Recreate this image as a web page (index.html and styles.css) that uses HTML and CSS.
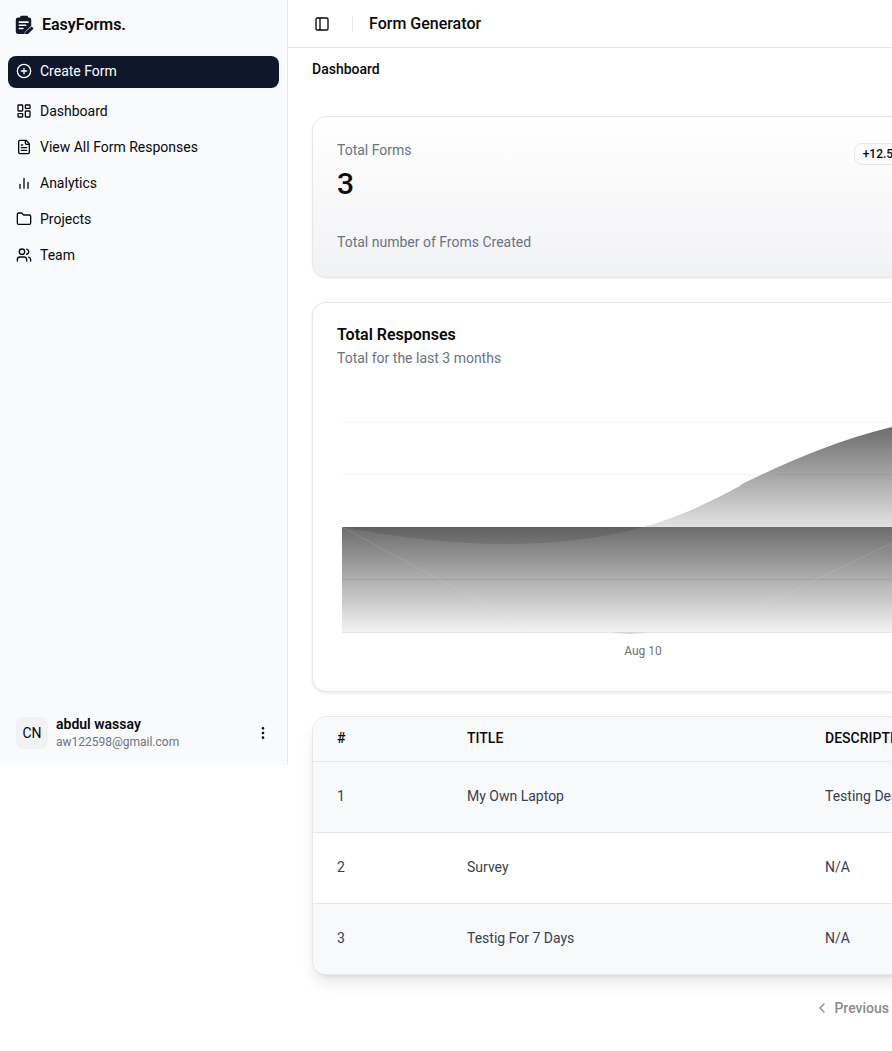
FILE: index.html
```html
<!DOCTYPE html>
<html lang="en">
<head>
  <meta charset="utf-8">
  <title>EasyForms</title>
  <link rel="stylesheet" href="styles.css">
</head>
<body>
<div class="app">

  <aside class="sidebar">
    <div class="brand">
      <svg class="logo" viewBox="0 0 24 24"><path d="M8 1h7a1.500 1.500 0 0 1 1.500 1.500V3h1A3 3 0 0 1 20.500 6v7.500L12.500 21.500 12 24H4a3 3 0 0 1-3-3V6a3 3 0 0 1 3-3h2.500v-.5A1.500 1.500 0 0 1 8 1z"/><path class="logo-cut" d="M5.500 9h11M5.500 13h8M5.500 17h4.500" /><path d="M21 14.500l2.500 2.500-7.500 7.500-3.500.5.500-3.500z"/></svg>
      <span class="brand-name">EasyForms.</span>
    </div>
    <a class="create-btn">
      <svg class="icon" viewBox="0 0 24 24"><circle cx="12" cy="12" r="10"/><path d="M8 12h8M12 8v8"/></svg>
      Create Form
    </a>
    <nav class="nav">
      <a class="nav-item">
        <svg class="icon" viewBox="0 0 24 24"><rect x="3" y="3" width="7" height="9" rx="1"/><rect x="14" y="3" width="7" height="5" rx="1"/><rect x="14" y="12" width="7" height="9" rx="1"/><rect x="3" y="16" width="7" height="5" rx="1"/></svg>
        Dashboard
      </a>
      <a class="nav-item">
        <svg class="icon" viewBox="0 0 24 24"><path d="M15 2H6a2 2 0 0 0-2 2v16a2 2 0 0 0 2 2h12a2 2 0 0 0 2-2V7Z"/><path d="M14 2v4a2 2 0 0 0 2 2h4"/><path d="M10 9H8M16 13H8M16 17H8"/></svg>
        View All Form Responses
      </a>
      <a class="nav-item">
        <svg class="icon" viewBox="0 0 24 24"><path d="M6 20v-6M12 20V5M18 20v-9"/></svg>
        Analytics
      </a>
      <a class="nav-item">
        <svg class="icon" viewBox="0 0 24 24"><path d="M20 20a2 2 0 0 0 2-2V8a2 2 0 0 0-2-2h-7.900a2 2 0 0 1-1.690-.9L9.600 3.900A2 2 0 0 0 7.930 3H4a2 2 0 0 0-2 2v13a2 2 0 0 0 2 2Z"/></svg>
        Projects
      </a>
      <a class="nav-item">
        <svg class="icon" viewBox="0 0 24 24"><path d="M16 21v-2a4 4 0 0 0-4-4H6a4 4 0 0 0-4 4v2"/><circle cx="9" cy="7" r="4"/><path d="M22 21v-2a4 4 0 0 0-3-3.870"/><path d="M16 3.130a4 4 0 0 1 0 7.750"/></svg>
        Team
      </a>
    </nav>
    <div class="user">
      <div class="avatar">CN</div>
      <div class="user-info">
        <div class="user-name">abdul wassay</div>
        <div class="user-mail">aw122598@gmail.com</div>
      </div>
      <svg class="icon" viewBox="0 0 24 24"><circle cx="12" cy="5" r="1"/><circle cx="12" cy="12" r="1"/><circle cx="12" cy="19" r="1"/></svg>
    </div>
  </aside>

  <div class="main">
    <header class="topbar">
      <svg class="icon" viewBox="0 0 24 24"><rect x="3" y="3" width="18" height="18" rx="2"/><path d="M9 3v18"/></svg>
      <span class="topbar-sep"></span>
      <span class="topbar-title">Form Generator</span>
    </header>

    <div class="content">
      <div class="crumb">Dashboard</div>

      <section class="card stat">
        <div class="stat-top">
          <div class="stat-label">Total Forms</div>
          <span class="badge">+12.5%
            <svg class="badge-icon" viewBox="0 0 24 24"><path d="M22 7l-8.500 8.500-5-5L2 17"/><path d="M16 7h6v6"/></svg>
          </span>
        </div>
        <div class="stat-value">3</div>
        <div class="stat-note">Total number of Froms Created</div>
      </section>

      <section class="card chart-card">
        <h3 class="chart-title">Total Responses</h3>
        <div class="chart-sub">Total for the last 3 months</div>
        <svg class="chart" width="640" height="270" viewBox="0 0 640 270">
          <defs>
            <linearGradient id="upper" gradientUnits="userSpaceOnUse" x1="0" y1="30" x2="0" y2="140">
              <stop offset="0" stop-color="#646464"/>
              <stop offset="1" stop-color="#e6e6e6"/>
            </linearGradient>
            <linearGradient id="band" gradientUnits="userSpaceOnUse" x1="0" y1="137" x2="0" y2="242">
              <stop offset="0" stop-color="#6c6c6c"/>
              <stop offset="1" stop-color="#f2f2f2"/>
            </linearGradient>
          </defs>
          <g class="grid">
            <path d="M5 32.500H640M5 84.500H640"/>
          </g>
          <path fill="url(#upper)" d="M306 137C345 127 378 109 403 96L405 94C450 72 500 50 555 37C590 29 620 26 640 25V137Z"/>
          <path class="grid-over" d="M440 84.500H640"/>
          <rect x="5" y="137" width="635" height="105" fill="url(#band)"/>
          <path class="crescent" d="M5 137C100 155 210 164 306 137Z"/>
          <path class="band-line" d="M5 137L190 237M555 153L420 218"/>
          <path class="grid-dark" d="M5 189.500H640"/>
          <path class="grid-base" d="M5 242.500H640"/>
          <path class="sliver" d="M274 242.500C285 244 300 244 312 242.500Z"/>
          <text class="tick" x="306" y="265" text-anchor="middle">Aug 10</text>
        </svg>
      </section>

      <section class="card table-card">
        <table class="forms">
          <thead>
            <tr><th class="c-num">#</th><th class="c-title">Title</th><th>Description</th></tr>
          </thead>
          <tbody>
            <tr><td>1</td><td>My Own Laptop</td><td>Testing Description</td></tr>
            <tr><td>2</td><td>Survey</td><td>N/A</td></tr>
            <tr><td>3</td><td>Testig For 7 Days</td><td>N/A</td></tr>
          </tbody>
        </table>
      </section>

      <div class="pager">
        <a class="pager-btn">
          <svg class="pager-icon" viewBox="0 0 24 24"><path d="m15 18-6-6 6-6"/></svg>
          Previous
        </a>
      </div>
    </div>
  </div>

</div>
</body>
</html>
```

FILE: styles.css
```css
html, body { margin: 0; padding: 0; height: 100%; overflow: hidden; background: #fff; }
body { font-family: "Roboto", "Liberation Sans", sans-serif; font-size: 14px; color: #09090b; }

.app { display: flex; align-items: flex-start; width: 976px; }

.icon { width: 16px; height: 16px; flex: none; fill: none; stroke: currentColor; stroke-width: 2; stroke-linecap: round; stroke-linejoin: round; }

/* sidebar */
.sidebar { box-sizing: border-box; width: 288px; height: 765px; flex: none; display: flex; flex-direction: column; padding: 8px; background: #f8fafc; border-right: 1px solid #e5e7eb; }
.brand { display: flex; align-items: center; gap: 8px; height: 32px; padding: 0 8px 0 7px; }
.logo { width: 19px; height: 19px; flex: none; fill: #111827; }
.logo-cut { fill: none; stroke: #f8fafc; stroke-width: 2; stroke-linecap: round; }
.brand-name { font-size: 16px; font-weight: 600; color: #09090b; }

.create-btn { box-sizing: border-box; display: flex; align-items: center; gap: 8px; height: 32px; margin-top: 16px; padding: 0 8px 2px; border-radius: 8px; background: #0f172a; color: #fff; }
.nav { display: flex; flex-direction: column; gap: 4px; margin-top: 7px; }
.nav-item { display: flex; align-items: center; gap: 8px; height: 32px; padding: 0 8px; color: #09090b; }

.user { display: flex; align-items: center; gap: 8px; margin-top: auto; padding: 8px 8px 6px; }
.avatar { width: 32px; height: 32px; flex: none; display: flex; align-items: center; justify-content: center; border-radius: 8px; background: #f1f2f3; }
.user-info { flex: 1; min-width: 0; }
.user-name { font-weight: 600; line-height: 18px; }
.user-mail { font-size: 12px; line-height: 18px; color: #6b7280; }

/* main */
.main { flex: 1; min-width: 0; }
.topbar { box-sizing: border-box; height: 48px; display: flex; align-items: center; padding: 0 24px 0 26px; border-bottom: 1px solid #e5e7eb; }
.topbar-sep { width: 1px; height: 16px; margin: 0 16px 0 22px; background: #e5e7eb; }
.topbar-title { font-size: 16px; font-weight: 500; }

.content { padding: 11px 24px 0; display: flex; flex-direction: column; }
.crumb { font-weight: 500; line-height: 20px; margin-bottom: 37px; }

.card { box-sizing: border-box; border: 1px solid #e5e7eb; border-radius: 14px; background: #fff; box-shadow: 0 1px 2px rgba(0, 0, 0, .05); }

.stat { height: 162px; padding: 23px 24px; background: linear-gradient(to bottom, #fff, #f1f2f4); }
.stat-top { display: flex; justify-content: space-between; align-items: flex-start; }
.stat-label { line-height: 20px; color: #6b7280; }
.badge { box-sizing: border-box; height: 22px; padding: 0 8px; display: flex; align-items: center; gap: 4px; font-size: 12px; font-weight: 500; border: 1px solid #e5e7eb; border-radius: 8px; margin-top: 3px; }
.badge-icon { width: 12px; height: 12px; fill: none; stroke: currentColor; stroke-width: 2; stroke-linecap: round; stroke-linejoin: round; }
.stat-value { font-size: 30px; font-weight: 500; line-height: 36px; margin-top: 1px; }
.stat-note { line-height: 20px; margin-top: 30px; color: #6b7280; }

.chart-card { height: 390px; margin-top: 24px; padding: 22px 24px 0; overflow: hidden; box-shadow: 0 1px 3px rgba(0, 0, 0, .1); }
.chart-title { margin: 0; font-size: 16px; font-weight: 600; line-height: 20px; }
.chart-sub { line-height: 20px; margin-top: 3px; color: #6b7280; }
.chart { display: block; margin-top: 22px; }
.grid path { stroke: #f3f4f5; stroke-width: 1; }
.grid-over { stroke: rgba(0, 0, 0, .07); stroke-width: 1; }
.crescent { fill: rgba(0, 0, 0, .1); }
.band-line { fill: none; stroke: rgba(255, 255, 255, .12); stroke-width: 1; }
.grid-dark { stroke: rgba(0, 0, 0, .07); stroke-width: 1; }
.grid-base { stroke: #e8e8e8; stroke-width: 1; }
.sliver { fill: #c8c8c8; }
.tick { font-size: 12px; fill: #6b7280; }

.table-card { margin-top: 24px; overflow: hidden; box-shadow: 0 10px 15px -3px rgba(0, 0, 0, .1), 0 4px 6px -4px rgba(0, 0, 0, .1); }
.forms { width: 100%; table-layout: fixed; border-collapse: collapse; }
.forms th, .forms td { padding: 0 24px 2px; text-align: left; white-space: nowrap; overflow: hidden; }
.forms th { height: 42px; font-weight: 500; text-transform: uppercase; background: #f9fafb; color: #09090b; border-bottom: 1px solid #e5e7eb; }
.forms td { height: 68px; color: #374151; border-bottom: 1px solid #e5e7eb; }
.forms tr:last-child td { border-bottom: none; }
.forms tbody tr:nth-child(odd) td { background: #f8f9fb; }
.c-num { width: 82px; }
.c-title { width: 310px; }

.pager { display: flex; justify-content: flex-end; margin-top: 23px; padding-right: 63px; }
.pager-btn { display: flex; align-items: center; gap: 4px; font-weight: 500; line-height: 20px; color: #8b8b8f; }
.pager-icon { width: 16px; height: 16px; fill: none; stroke: currentColor; stroke-width: 2; stroke-linecap: round; stroke-linejoin: round; }
```
